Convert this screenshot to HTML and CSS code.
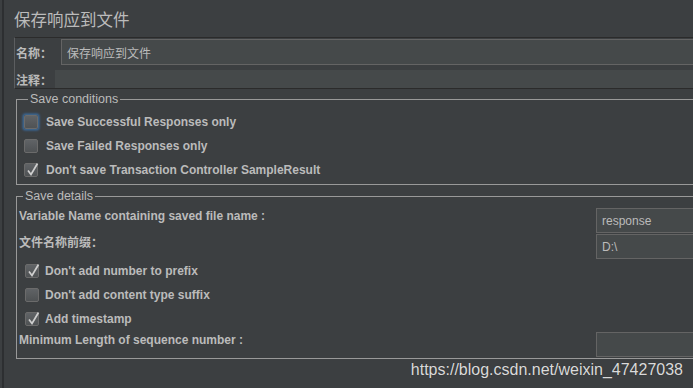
FILE: index.html
```html
<!DOCTYPE html>
<html lang="zh-CN">
<head>
    <meta charset="UTF-8">
    <meta name="viewport" content="width=device-width, initial-scale=1.0">
    <title>保存响应到文件</title>
    <link rel="stylesheet" href="styles.css">
</head>
<body>
    <div class="app">
        <div class="main">
            <h1 class="title">保存响应到文件</h1>

            <div class="namebox">
                <div class="name-row">
                    <span class="cn-label name-label">名称：</span>
                    <div class="field name-field">保存响应到文件</div>
                </div>
                <div class="comment-row">
                    <span class="cn-label comment-label">注释：</span>
                    <div class="comment-field"></div>
                </div>
            </div>

            <fieldset class="group conditions">
                <legend>Save conditions</legend>
                <div class="check"><span class="box focus"></span>Save Successful Responses only</div>
                <div class="check"><span class="box"></span>Save Failed Responses only</div>
                <div class="check"><span class="box checked"><svg viewBox="0 0 14 14"><path d="M3 7.5 L6 11.5 L12.5 0.5"/></svg></span>Don't save Transaction Controller SampleResult</div>
            </fieldset>

            <fieldset class="group details">
                <legend>Save details</legend>
                <div class="row">
                    <span class="row-label">Variable Name containing saved file name :</span>
                    <div class="field">response</div>
                </div>
                <div class="row">
                    <span class="row-label cn-label">文件名称前缀：</span>
                    <div class="field">D:\</div>
                </div>
                <div class="check"><span class="box checked"><svg viewBox="0 0 14 14"><path d="M3 7.5 L6 11.5 L12.5 0.5"/></svg></span>Don't add number to prefix</div>
                <div class="check"><span class="box"></span>Don't add content type suffix</div>
                <div class="check"><span class="box checked"><svg viewBox="0 0 14 14"><path d="M3 7.5 L6 11.5 L12.5 0.5"/></svg></span>Add timestamp</div>
                <div class="row">
                    <span class="row-label">Minimum Length of sequence number :</span>
                    <div class="field"></div>
                </div>
            </fieldset>
        </div>

        <div class="watermark">https://blog.csdn.net/weixin_47427038</div>
    </div>
</body>
</html>
```

FILE: styles.css
```css
* {
    margin: 0;
    padding: 0;
    box-sizing: border-box;
}

html, body {
    height: 100%;
}

body {
    background-color: #3c3f41;
    color: #bbbbbb;
    font-family: "Liberation Sans", Arial, "Noto Sans CJK SC", sans-serif;
    font-size: 12px;
    overflow: hidden;
}

.app {
    position: relative;
    height: 100%;
    margin-left: 2px;
    border-left: 2px solid #2d2f31;
    padding-left: 10px;
    overflow: hidden;
}

.main {
    margin-right: -30px;
}

.title {
    font-family: "Noto Sans CJK SC", sans-serif;
    font-size: 16.5px;
    font-weight: normal;
    line-height: 22px;
    padding-top: 8px;
    margin-bottom: 7px;
    color: #bbbbbb;
}

/* name / comment box */
.namebox {
    border-top: 1px solid #2b2b2b;
    border-left: 1px solid #5c5e60;
    border-bottom: 1px solid #2b2b2b;
    padding: 1px 0 0 1px;
}

.cn-label {
    font-family: "Noto Sans CJK SC", sans-serif;
    font-weight: bold;
    font-size: 12px;
}

.name-row,
.comment-row {
    display: flex;
    align-items: center;
}

.name-label {
    width: 45px;
}

.comment-label {
    width: 39px;
}

.name-row {
    height: 26px;
}

.comment-row {
    margin-top: 5px;
    height: 18px;
}

.field {
    height: 25px;
    border: 1px solid #646464;
    background-color: #45494a;
    padding-left: 5px;
    display: flex;
    align-items: center;
    font-weight: normal;
    color: #bbbbbb;
}

.name-field {
    flex: 1;
    height: 26px;
    font-family: "Noto Sans CJK SC", sans-serif;
}

.comment-field {
    flex: 1;
    height: 18px;
    background-color: #45494a;
}

/* fieldsets */
.group {
    margin-left: 2px;
    border: 1px solid #999999;
    min-width: 0;
}

.group legend {
    margin-left: 4px;
    padding: 0 2px;
    line-height: 14px;
    font-size: 12.5px;
    color: #bbbbbb;
}

.conditions {
    margin-top: 3px;
    padding: 4px 0 2px 7px;
}

.details {
    margin-top: 4px;
    padding: 5px 0 1px 2px;
}

.check {
    display: flex;
    align-items: center;
    height: 24px;
    font-weight: bold;
}

.details .check {
    padding-left: 6px;
}

.details .check .box {
    margin-right: 6px;
}

.box {
    width: 14px;
    height: 14px;
    margin-right: 8px;
    border: 1px solid #6b6b6b;
    border-radius: 2px;
    background: linear-gradient(#606366, #4f5254);
    position: relative;
    flex-shrink: 0;
}

.box.focus {
    box-shadow: 0 0 0 1px #3d6185, 0 0 2px 2px #3a5d80;
}

.box svg {
    position: absolute;
    left: 0;
    top: -1px;
    width: 14px;
    height: 14px;
    overflow: visible;
}

.box svg path {
    fill: none;
    stroke: #cfcfcf;
    stroke-width: 1.7;
}

.row {
    display: flex;
    align-items: flex-start;
    margin-top: 1px;
}

.row:first-of-type {
    margin-top: 0;
}

.row-label {
    flex: 1;
    padding-top: 1px;
    line-height: 14px;
    font-weight: bold;
}

.row .field {
    width: 126px;
}

.watermark {
    position: absolute;
    right: 10px;
    bottom: 9px;
    font-family: "Liberation Sans", Arial, sans-serif;
    font-size: 16px;
    line-height: 18px;
    color: #dadada;
    text-shadow: 0 0 1px rgba(0, 0, 0, 0.3);
}
```
